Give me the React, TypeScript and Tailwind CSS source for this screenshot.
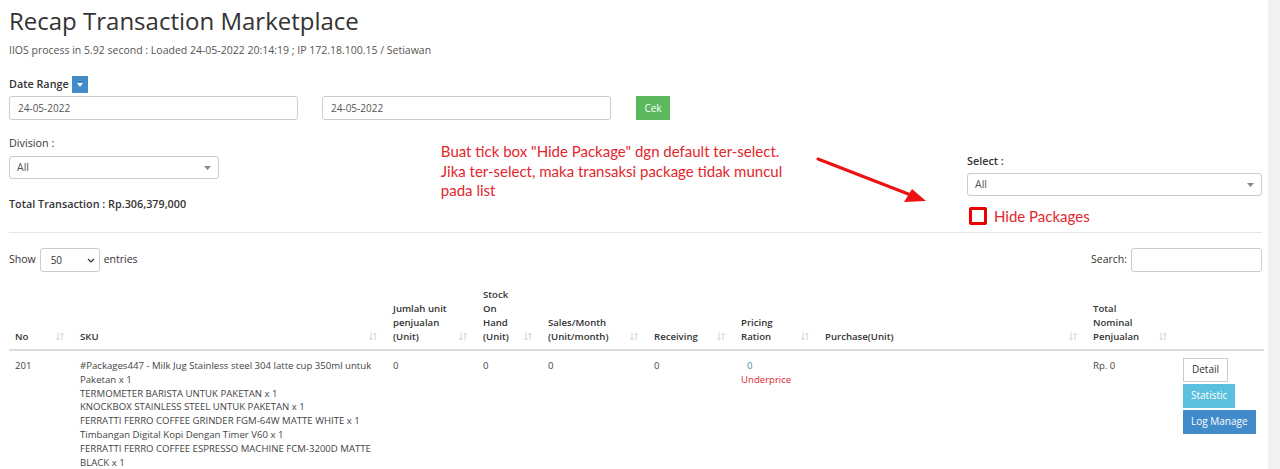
const font = { fontFamily: '"Open Sans", "Noto Sans", sans-serif' };
const noteFont = { fontFamily: 'Lato, "Open Sans", sans-serif' };

function SortIcon() {
  return (
    <svg width="8" height="9" viewBox="0 0 8 9" className="shrink-0 mb-[3px]">
      <path d="M2 0.5v7M0.5 6l1.5 2 1.5-2" stroke="#d4d4d4" strokeWidth="1" fill="none" />
      <path d="M6 8.5v-7M4.5 3l1.5-2 1.5 2" stroke="#d4d4d4" strokeWidth="1" fill="none" />
    </svg>
  );
}

function Caret() {
  return (
    <svg width="7" height="4" viewBox="0 0 7 4">
      <path d="M0 0h7L3.5 4z" fill="#888" />
    </svg>
  );
}

const columns: { label: string[]; width: number; sort: boolean; pl: number }[] = [
  { label: ['No'], width: 63, sort: true, pl: 6 },
  { label: ['SKU'], width: 313, sort: true, pl: 8 },
  { label: ['Jumlah unit', 'penjualan', '(Unit)'], width: 90, sort: true, pl: 8 },
  { label: ['Stock', 'On', 'Hand', '(Unit)'], width: 65, sort: true, pl: 8 },
  { label: ['Sales/Month', '(Unit/month)'], width: 106, sort: true, pl: 8 },
  { label: ['Receiving'], width: 87, sort: true, pl: 8 },
  { label: ['Pricing', 'Ration'], width: 84, sort: true, pl: 8 },
  { label: ['Purchase(Unit)'], width: 268, sort: true, pl: 8 },
  { label: ['Total', 'Nominal', 'Penjualan'], width: 90, sort: true, pl: 8 },
  { label: [''], width: 89, sort: false, pl: 8 },
];

const skuLines = [
  '#Packages447 - Milk Jug Stainless steel 304 latte cup 350ml untuk Paketan x 1',
  'TERMOMETER BARISTA UNTUK PAKETAN x 1',
  'KNOCKBOX STAINLESS STEEL UNTUK PAKETAN x 1',
  'FERRATTI FERRO COFFEE GRINDER FGM-64W MATTE WHITE x 1',
  'Timbangan Digital Kopi Dengan Timer V60 x 1',
  'FERRATTI FERRO COFFEE ESPRESSO MACHINE FCM-3200D MATTE BLACK x 1',
];

export default function App() {
  return (
    <div className="flex w-[1280px] h-[469px] overflow-hidden bg-white text-[#333]" style={font}>
      <div className="w-[1268px] pl-[9px] pr-[6px]">
        <h1 className="text-[24px] leading-[32px] pt-[5px] text-[#333] font-normal">Recap Transaction Marketplace</h1>
        <p className="text-[10.5px] leading-[14px] mt-[6px] text-[#555]">
          IIOS process in 5.92 second : Loaded 24-05-2022 20:14:19 ; IP 172.18.100.15 / Setiawan
        </p>

        <div className="flex items-center gap-[3px] mt-[19px] h-[17px]">
          <span className="text-[10.8px] font-semibold">Date Range</span>
          <span className="w-[16px] h-[17px] bg-[#428bca] flex items-center justify-center">
            <svg width="6" height="4" viewBox="0 0 6 4">
              <path d="M0 0h6L3 4z" fill="#fff" />
            </svg>
          </span>
        </div>

        <div className="flex items-center mt-[3px]">
          <div className="w-[289px] h-[24px] border border-[#ccc] rounded-[3px] px-[8px] flex items-center text-[10px] text-[#555]">
            24-05-2022
          </div>
          <div className="w-[289px] h-[24px] ml-[24px] border border-[#ccc] rounded-[3px] px-[8px] flex items-center text-[10px] text-[#555]">
            24-05-2022
          </div>
          <button className="ml-[25px] w-[34px] h-[24px] bg-[#5cb85c] text-white text-[10px] flex items-center justify-center">
            Cek
          </button>
        </div>

        <div className="flex mt-[9px] h-[103px]">
          <div className="w-[432px] pt-[7px]">
            <div className="text-[10.8px] leading-[14px]">Division :</div>
            <div className="w-[210px] h-[23px] mt-[6px] border border-[#ccc] rounded-[3px] pl-[7px] pr-[7px] flex items-center justify-between text-[10.5px] text-[#555]">
              <span>All</span>
              <Caret />
            </div>
            <div className="text-[10.8px] leading-[14px] font-semibold mt-[18px]">Total Transaction : Rp.306,379,000</div>
          </div>
          <div className="w-[375px] pt-[13px] pl-[2px] text-[15px] leading-[19.5px] text-[#e3262c]" style={noteFont}>
            Buat tick box "Hide Package" dgn default ter-select.
            <br />
            Jika ter-select, maka transaksi package tidak muncul
            <br />
            pada list
          </div>
          <svg width="124" height="90" viewBox="0 0 124 90" className="shrink-0 mt-[23px]">
            <line x1="6" y1="7" x2="104" y2="45" stroke="#ee1111" strokeWidth="3" strokeLinecap="round" />
            <path d="M114 49L92 50L100 37Z" fill="#ee1111" />
          </svg>
          <div className="w-[295px] ml-[31px] pt-[25px]">
            <div className="text-[10.8px] leading-[14px] font-semibold">Select :</div>
            <div className="w-[295px] h-[23px] mt-[5px] border border-[#ccc] rounded-[3px] pl-[7px] pr-[7px] flex items-center justify-between text-[10.5px] text-[#555]">
              <span>All</span>
              <Caret />
            </div>
            <div className="flex items-center mt-[9px] ml-[2px]">
              <span className="w-[18px] h-[18px] border-[3px] border-[#ee0000] rounded-[2px] bg-white" />
              <span className="ml-[7px] text-[15px] text-[#e3262c]" style={noteFont}>
                Hide Packages
              </span>
            </div>
          </div>
        </div>

        <div className="border-t border-[#e5e5e5] w-[1253px]" />

        <div className="flex items-center justify-between w-[1253px] mt-[15px]">
          <div className="flex items-center text-[10.5px]">
            <span>Show</span>
            <div className="ml-[4px] w-[60px] h-[24px] border border-[#ccc] rounded-[3px] pl-[10px] pr-[4px] flex items-center justify-between text-[10px]">
              <span>50</span>
              <svg width="8" height="5" viewBox="0 0 8 5">
                <path d="M1 1l3 3 3-3" stroke="#333" strokeWidth="1.2" fill="none" />
              </svg>
            </div>
            <span className="ml-[4px]">entries</span>
          </div>
          <div className="flex items-center text-[10.5px]">
            <span>Search:</span>
            <div className="ml-[4px] w-[131px] h-[24px] border border-[#ccc] rounded-[3px]" />
          </div>
        </div>

        <table className="mt-[16px] border-collapse table-fixed w-[1255px] text-[9.6px]">
          <thead>
            <tr className="border-b-2 border-[#ddd]">
              {columns.map((c, i) => (
                <th
                  key={i}
                  className="align-bottom text-left font-semibold pb-[5px] pr-[8px] leading-[14px]"
                  style={{ width: c.width, paddingLeft: c.pl }}
                >
                  <div className="flex items-end justify-between">
                    <span>
                      {c.label.map((l, j) => (
                        <div key={j}>{l}</div>
                      ))}
                    </span>
                    {c.sort && <SortIcon />}
                  </div>
                </th>
              ))}
            </tr>
          </thead>
          <tbody>
            <tr className="align-top leading-[13.8px] text-[#444]">
              <td className="pt-[8px] pl-[6px]">201</td>
              <td className="pt-[8px] pl-[8px] pr-[6px]">
                {skuLines.map((l, i) => (
                  <div key={i}>{l}</div>
                ))}
              </td>
              <td className="pt-[8px] pl-[8px]">0</td>
              <td className="pt-[8px] pl-[8px]">0</td>
              <td className="pt-[8px] pl-[8px]">0</td>
              <td className="pt-[8px] pl-[8px]">0</td>
              <td className="pt-[8px] pl-[8px]">
                <div className="ml-[6px] text-[#3c8dbc]">0</div>
                <div className="text-[#e3262c]">Underprice</div>
              </td>
              <td className="pt-[8px] pl-[8px]"></td>
              <td className="pt-[8px] pl-[8px]">Rp. 0</td>
              <td className="pt-[7px] pl-[8px]">
                <div className="flex flex-col items-start gap-[2px] text-[10px]">
                  <button className="h-[24px] px-[8px] border border-[#ccc] bg-white text-[#333]">Detail</button>
                  <button className="h-[24px] px-[8px] bg-[#5bc0de] text-white">Statistic</button>
                  <button className="h-[24px] px-[8px] bg-[#428bca] text-white">Log Manage</button>
                </div>
              </td>
            </tr>
          </tbody>
        </table>
      </div>
      <div className="w-[12px] h-full bg-[#f1f1f1]" />
    </div>
  );
}
